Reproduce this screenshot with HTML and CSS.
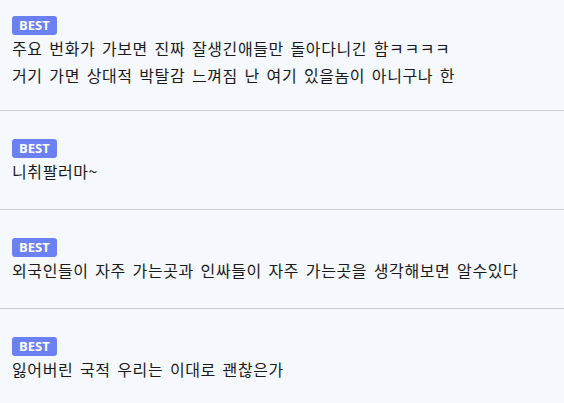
FILE: index.html
```html
<!DOCTYPE html>
<html lang="ko">
<head>
  <meta charset="UTF-8" />
  <meta name="viewport" content="width=device-width, initial-scale=1.0" />
  <title>BEST 댓글</title>
  <link rel="stylesheet" href="styles.css">
</head>

<body>
  <ul class="comments">
    <li class="comment first">
      <span class="badge">BEST</span>
      <p class="text">주요 번화가 가보면 진짜 잘생긴애들만 돌아다니긴 함ㅋㅋㅋㅋ<br>거기 가면 상대적 박탈감 느껴짐 난 여기 있을놈이 아니구나 한</p>
    </li>
    <li class="comment">
      <span class="badge">BEST</span>
      <p class="text">니취팔러마~</p>
    </li>
    <li class="comment">
      <span class="badge">BEST</span>
      <p class="text">외국인들이 자주 가는곳과 인싸들이 자주 가는곳을 생각해보면 알수있다</p>
    </li>
    <li class="comment">
      <span class="badge">BEST</span>
      <p class="text">잃어버린 국적 우리는 이대로 괜찮은가</p>
    </li>
  </ul>
</body>
</html>
```

FILE: styles.css
```css
  body {
    margin: 0;
    background: #f5f8fd;
    color: #1a1a1a;
    font-family: "Noto Sans CJK KR", "Noto Sans", sans-serif;
  }

  .comments {
    list-style: none;
    margin: 0;
    padding: 0;
  }

  .comment {
    display: flex;
    flex-direction: column;
    align-items: flex-start;
    padding: 28px 12px 24px;
    border-bottom: 1px solid #c9ccd2;
  }

  .comment.first {
    padding-top: 16px;
    padding-bottom: 21px;
  }

  .comment:last-child {
    border-bottom: none;
  }

  .badge {
    display: block;
    height: 19px;
    line-height: 19px;
    padding: 0 7px;
    border-radius: 3px;
    background: #6b80f3;
    color: #fff;
    font-family: "Open Sans", sans-serif;
    font-weight: 700;
    font-size: 13px;
  }

  .text {
    margin: 0;
    font-size: 16px;
    line-height: 27px;
    letter-spacing: 0.6px;
    word-spacing: 1.6px;
  }
```
